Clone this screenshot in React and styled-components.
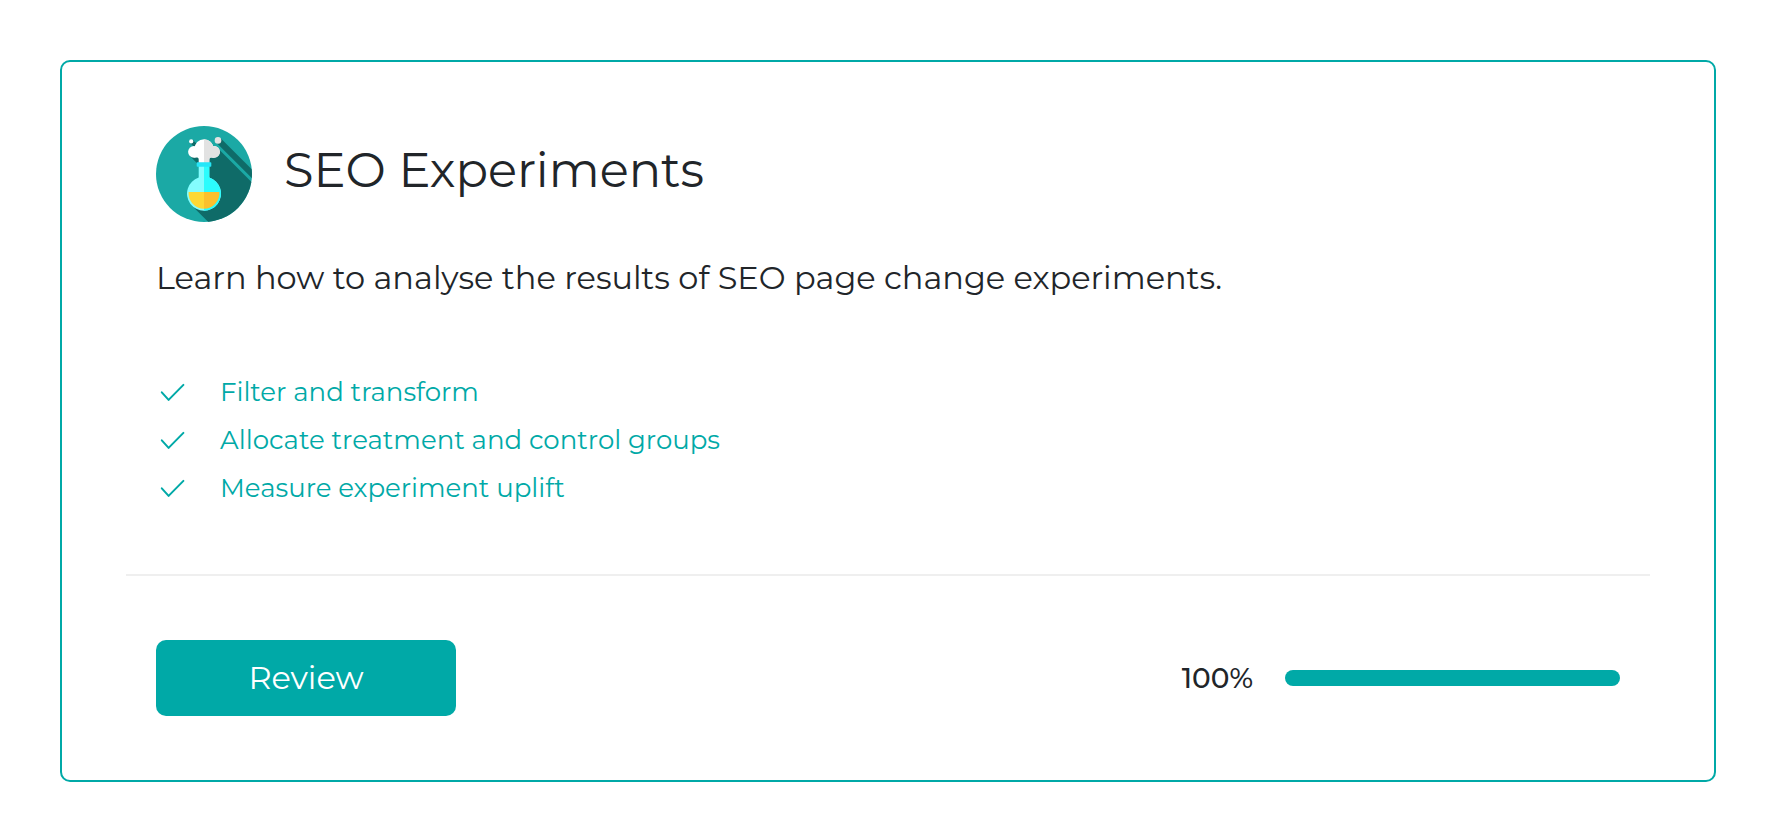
import React from "react"
import styled, { createGlobalStyle } from "styled-components"

const GlobalStyle = createGlobalStyle`
  * {
    box-sizing: border-box;
  }

  body {
    margin: 0;
    background: #fff;
    color: #212529;
    font-family: Montserrat, Inter, "Open Sans", sans-serif;
  }
`

const Card = styled.article`
  margin: 60px 66px 58px 60px;
  padding: 64px;
  border: 2px solid #00a9a7;
  border-radius: 10px;
`

const Body = styled.div`
  padding: 0 30px 62px;
  border-bottom: 2px solid #efefef;
`

const Header = styled.header`
  display: flex;
  align-items: center;
  gap: 32px;
`

const Badge = styled.svg`
  flex: none;
  width: 96px;
  height: 96px;
`

const Heading = styled.h1`
  margin: 0 0 8px;
  font-size: 48px;
  font-weight: 400;
  line-height: 60px;
`

const Summary = styled.p`
  margin: 32px 0 66px;
  font-size: 32px;
  line-height: 48px;
`

const Topics = styled.ul`
  margin: 0;
  padding: 0;
  list-style: none;
`

const Topic = styled.li`
  display: flex;
  align-items: center;
  gap: 32px;
  color: #00a9a7;
  font-size: 26px;
  font-weight: 400;
  line-height: 48px;
`

const CheckIcon = styled.svg`
  flex: none;
  width: 32px;
  height: 32px;
`

const Footer = styled.footer`
  display: flex;
  align-items: center;
  justify-content: space-between;
  padding: 64px 30px 0;
`

const Button = styled.button`
  width: 300px;
  padding: 14px 32px;
  border: 0;
  border-radius: 10px;
  background: #00a9a7;
  color: #fff;
  font-family: inherit;
  font-size: 32px;
  line-height: 48px;
  cursor: pointer;
`

const Completion = styled.div`
  display: flex;
  align-items: center;
  gap: 32px;
`

const Percent = styled.label`
  font-size: 28px;
  font-weight: 500;
`

const Bar = styled.progress`
  appearance: none;
  display: block;
  width: 335px;
  height: 16px;
  border: 0;
  border-radius: 8px;
  background: #efefef;
  overflow: hidden;

  &::-webkit-progress-bar {
    background: #efefef;
  }

  &::-webkit-progress-value {
    background: #00a9a7;
  }
`

const topics = [
  "Filter and transform",
  "Allocate treatment and control groups",
  "Measure experiment uplift",
]

const Check = () => (
  <CheckIcon viewBox="0 0 32 32" aria-hidden="true">
    <path
      d="M5.8 16.3 12.6 23.9 27.4 8.9"
      fill="none"
      stroke="currentColor"
      strokeWidth="2"
      strokeLinecap="round"
      strokeLinejoin="round"
    />
  </CheckIcon>
)

const Flask = () => (
  <Badge viewBox="0 0 96 96" aria-hidden="true">
    <defs>
      <clipPath id="disc">
        <circle cx="48" cy="48" r="48" />
      </clipPath>
      <clipPath id="right">
        <rect x="48" y="0" width="48" height="96" />
      </clipPath>
      <g id="smoke">
        <circle cx="48" cy="22.8" r="9.6" />
        <circle cx="37.9" cy="25.9" r="5.8" />
        <circle cx="58.1" cy="25.9" r="5.8" />
        <path d="M38 24h20v7.6h-3.2q-1.5 0-1.5 2V38H42.7v-4.4q0-2-1.5-2H38z" />
      </g>
      <path
        id="glass"
        d="M42.7 40h10.6v11.5A17 17 0 1 1 42.7 51.5z"
      />
    </defs>
    <g clipPath="url(#disc)">
      <rect width="96" height="96" fill="#1ba9a5" />
      {/* long shadows */}
      <g fill="#0f6b68">
        <path d="M61.6 22 110 70.4V110H66.3L36 79.7 48 67.7V44.2L33.9 30.1z" />
        <path d="M64.4 12 110 57.6V66.2L59.7 15.9z" />
        <path d="M36.8 13.9 44 21.1 40 22.8 33.9 16.7z" />
      </g>
      <use href="#smoke" fill="#fff" />
      <use href="#smoke" fill="#e2e2e2" clipPath="url(#right)" />
      <circle cx="35.2" cy="15.4" r="2.1" fill="#fff" />
      <circle cx="62" cy="14.4" r="3.3" fill="#e2e2e2" />
      <use href="#glass" fill="#84fdfe" />
      <use href="#glass" fill="#2bfcfd" clipPath="url(#right)" />
      <rect x="40.7" y="36.2" width="14.6" height="4.6" rx="0.8" fill="#25e6f8" />
      <path d="M32.6 66H48V82.7A15.5 15.5 0 0 1 32.6 66z" fill="#fdd835" />
      <path d="M48 66H63.4A15.5 15.5 0 0 1 48 82.7z" fill="#fbc02d" />
    </g>
  </Badge>
)

const App = () => (
  <>
    <GlobalStyle />
    <Card>
      <Body>
        <Header>
          <Flask />
          <Heading>SEO Experiments</Heading>
        </Header>
        <Summary>
          Learn how to analyse the results of SEO page change experiments.
        </Summary>
        <Topics>
          {topics.map(topic => (
            <Topic key={topic}>
              <Check />
              {topic}
            </Topic>
          ))}
        </Topics>
      </Body>
      <Footer>
        <Button type="button">Review</Button>
        <Completion>
          <Percent htmlFor="completion">100%</Percent>
          <Bar id="completion" value="100" max="100" />
        </Completion>
      </Footer>
    </Card>
  </>
)

export default App
